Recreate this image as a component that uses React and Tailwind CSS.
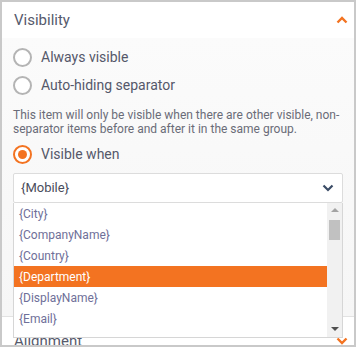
const items = ['{City}', '{CompanyName}', '{Country}', '{Department}', '{DisplayName}', '{Email}'];

function Radio({ checked, label }) {
    return (
        <div className="flex h-[28px] items-center gap-[9px]">
            <span
                className={
                    checked
                        ? 'flex h-[19px] w-[19px] items-center justify-center rounded-full border-2 border-[#f37321] bg-white'
                        : 'h-[19px] w-[19px] rounded-full border-2 border-[#b4b4b4] bg-white'
                }
            >
                {checked && <span className="h-[9px] w-[9px] rounded-full bg-[#f37321]" />}
            </span>
            <span className="text-[14px] text-[#55586a]">{label}</span>
        </div>
    );
}

export default function App() {
    return (
        <div
            className="h-[347px] w-[356px] overflow-hidden border-2 border-[#c9c9c9] bg-white"
            style={{ fontFamily: 'Roboto, "Liberation Sans", sans-serif' }}
        >
            {/* Visibility panel */}
            <div className="flex h-[36px] items-center justify-between bg-white pl-[12px] pr-[6px]">
                <span className="text-[15px] text-[#565a6c]">Visibility</span>
                <svg width="12" height="8" viewBox="0 0 12 8" fill="none">
                    <path d="M1.5 6.5 L6 2 L10.5 6.5" stroke="#f37321" strokeWidth="2.4" />
                </svg>
            </div>

            <div className="h-[279px] border-b border-[#e2e2e2] bg-gradient-to-b from-[#fbfbfb] to-[#f6f6f6] px-[11px] pt-[5px]">
                <Radio label="Always visible" />
                <Radio label="Auto-hiding separator" />
                <p className="mt-[9px] text-[12px] leading-[14px] text-[#6a6c78]">
                    This item will only be visible when there are other visible, non-separator items before and after it in the same group.
                </p>
                <div className="mt-[4px]">
                    <Radio checked label="Visible when" />
                </div>

                <div className="relative mt-[5px]">
                    <div className="flex h-[30px] items-center justify-between rounded-[2px] border border-[#dcdcdc] bg-white pl-[7px] pr-[8px]">
                        <span className="text-[13px] text-[#4a4c5c]">{'{Mobile}'}</span>
                        <svg width="12" height="8" viewBox="0 0 12 8" fill="none">
                            <path d="M1.5 1.5 L6 6 L10.5 1.5" stroke="#3b4c66" strokeWidth="2.2" />
                        </svg>
                    </div>

                    {/* open list */}
                    <div className="absolute left-0 right-0 top-full z-10 flex h-[135px] overflow-hidden border border-t-0 border-[#d6d6d6] bg-white">
                        <ul className="flex-1">
                            {items.map((item) => (
                                <li
                                    key={item}
                                    className={
                                        item === '{Department}'
                                            ? 'flex h-[21px] items-center bg-[#f37321] pl-[5px] text-[12px] text-white'
                                            : 'flex h-[21px] items-center pl-[5px] text-[12px] text-[#6f7099]'
                                    }
                                >
                                    {item}
                                </li>
                            ))}
                        </ul>
                        <div className="flex w-[15px] flex-col items-center bg-[#f1f1f1]">
                            <span className="mt-[5px] h-0 w-0 border-x-[4px] border-b-[4px] border-x-transparent border-b-[#a3a3a3]" />
                            <span className="mt-[8px] h-[20px] w-[11px] bg-[#c1c1c1]" />
                            <span className="mb-[6px] mt-auto h-0 w-0 border-x-[4px] border-t-[4px] border-x-transparent border-t-[#505050]" />
                        </div>
                    </div>
                </div>
            </div>

            {/* Alignment panel (collapsed) */}
            <div className="flex h-[36px] items-center justify-between bg-white pl-[12px] pr-[6px] pt-[12px]">
                <span className="text-[15px] text-[#565a6c]">Alignment</span>
                <svg width="12" height="8" viewBox="0 0 12 8" fill="none">
                    <path d="M1.5 1.5 L6 6 L10.5 1.5" stroke="#f37321" strokeWidth="2.4" />
                </svg>
            </div>
        </div>
    );
}
